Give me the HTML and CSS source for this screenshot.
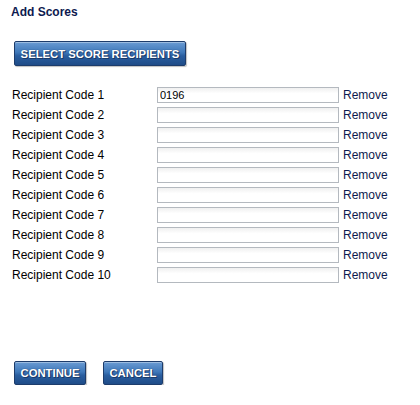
FILE: index.html
```html
<!DOCTYPE html>
<html>
<head>
<meta charset="utf-8">
<link rel="stylesheet" href="styles.css">
</head>
<body>
<div class="page">
  <h1 class="title">Add Scores</h1>
  <button class="btn btn-select">SELECT SCORE RECIPIENTS</button>
  <div class="rows">
    <div class="row"><span class="label">Recipient Code 1</span><input class="code" value="0196"><a class="remove">Remove</a></div>
    <div class="row"><span class="label">Recipient Code 2</span><input class="code"><a class="remove">Remove</a></div>
    <div class="row"><span class="label">Recipient Code 3</span><input class="code"><a class="remove">Remove</a></div>
    <div class="row"><span class="label">Recipient Code 4</span><input class="code"><a class="remove">Remove</a></div>
    <div class="row"><span class="label">Recipient Code 5</span><input class="code"><a class="remove">Remove</a></div>
    <div class="row"><span class="label">Recipient Code 6</span><input class="code"><a class="remove">Remove</a></div>
    <div class="row"><span class="label">Recipient Code 7</span><input class="code"><a class="remove">Remove</a></div>
    <div class="row"><span class="label">Recipient Code 8</span><input class="code"><a class="remove">Remove</a></div>
    <div class="row"><span class="label">Recipient Code 9</span><input class="code"><a class="remove">Remove</a></div>
    <div class="row"><span class="label">Recipient Code 10</span><input class="code"><a class="remove">Remove</a></div>
  </div>
  <div class="actions">
    <button class="btn btn-continue">CONTINUE</button>
    <button class="btn btn-cancel">CANCEL</button>
  </div>
</div>
</body>
</html>
```
FILE: styles.css
```css
html, body {
  margin: 0;
  padding: 0;
  background: #ffffff;
}
.page {
  font-family: "Liberation Sans", Arial, sans-serif;
  font-size: 12px;
  color: #000;
  padding: 5px 0 0 0;
}
.title {
  margin: 0 0 0 11px;
  font-size: 12px;
  line-height: 14px;
  font-weight: bold;
  color: #0d1a4f;
}
.btn {
  display: block;
  box-sizing: border-box;
  height: 25px;
  padding: 0;
  border: 1px solid #1d3c6b;
  border-radius: 2px;
  background: linear-gradient(to bottom, #6a9bd3 0%, #3f78b9 45%, #2a5e9f 60%, #1f4c88 100%);
  box-shadow: 1px 1px 1px rgba(0,0,0,0.25), inset 0 1px 0 rgba(255,255,255,0.35);
  color: #ffffff;
  font-family: "Liberation Sans", Arial, sans-serif;
  font-size: 11.3px;
  font-weight: bold;
  text-shadow: 0 0 1px #16325e, 1px 1px 0 #1b3b6b;
  text-align: center;
}
.btn-select {
  margin: 22px 0 0 14px;
  width: 172px;
}
.rows {
  margin: 19px 0 0 12px;
}
.row {
  display: grid;
  grid-template-columns: 141px 182px auto;
  column-gap: 4px;
  align-items: center;
  height: 20px;
}
.label {
  line-height: 14px;
  color: #000;
}
.code {
  box-sizing: border-box;
  width: 182px;
  height: 16px;
  margin: 0;
  padding: 0 2px;
  border: 1px solid #b4b9bf;
  background: linear-gradient(to bottom, #f0f0f0 0%, #ffffff 40%, #ffffff 100%);
  font-family: "Liberation Sans", Arial, sans-serif;
  font-size: 11px;
  color: #000;
  outline: none;
}
.remove {
  color: #0d1a4f;
  line-height: 14px;
  text-decoration: none;
}
.actions {
  display: flex;
  gap: 17px;
  margin: 76px 0 0 14px;
}
.btn-continue {
  width: 72px;
  height: 24px;
}
.btn-cancel {
  width: 60px;
  height: 24px;
}
```
